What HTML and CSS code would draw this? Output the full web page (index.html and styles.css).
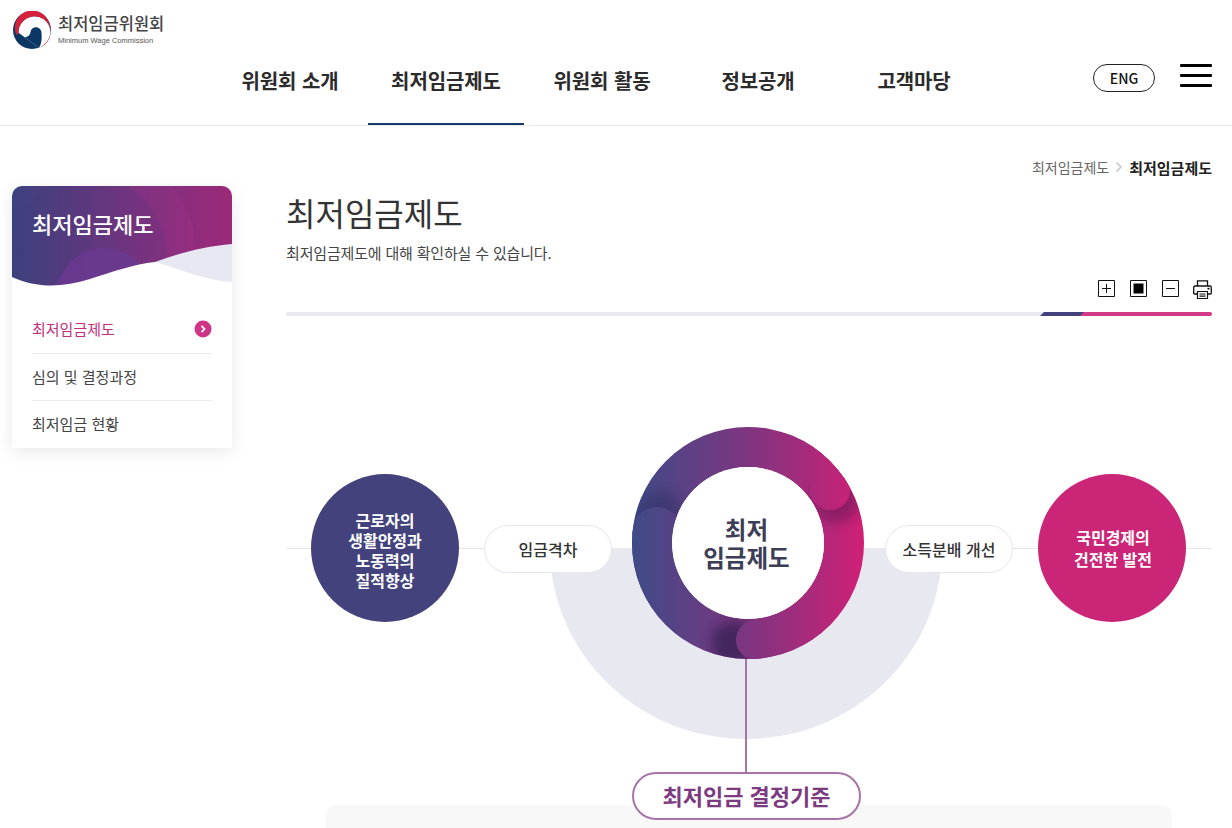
FILE: index.html
```html
<!DOCTYPE html>
<html lang="ko">
<head>
  <meta charset="UTF-8">
  <meta name="viewport" content="width=device-width, initial-scale=1.0">
  <title>최저임금제도 - 최저임금위원회</title>
  <link rel="stylesheet" href="styles.css">
</head>
<body>
  <div class="page">
    <header class="header">
      <a class="logo" href="#">
        <svg class="logo-mark" viewBox="0 0 38 38" width="38" height="38">
          <circle cx="19" cy="19" r="19" fill="#0b3765"/>
          <path d="M5.500 22A16 16 0 1 1 26 36.700Z" fill="#fff"/>
          <path d="M3.500 24A16.500 16.500 0 0 1 35 9.500 19 19 0 0 1 26 36.700 16 16 0 1 0 5.500 22Z" fill="#d6213c"/>
          <path d="M5.500 22A6.200 6.200 0 0 0 17.500 21 5.500 5.500 0 0 1 28.500 22.500C29 28 28.500 33 26 36.700Z" fill="#0b3765"/>
        </svg>
        <span class="logo-text">
          <strong>최저임금위원회</strong>
          <small>Minimum Wage Commission</small>
        </span>
      </a>
      <nav class="gnb">
        <a href="#">위원회 소개</a>
        <a href="#" class="on">최저임금제도</a>
        <a href="#">위원회 활동</a>
        <a href="#">정보공개</a>
        <a href="#">고객마당</a>
      </nav>
      <div class="util">
        <a class="eng" href="#">ENG</a>
        <button class="burger" aria-label="menu"><i></i><i></i><i></i></button>
      </div>
    </header>

    <div class="wrap">
      <aside class="side">
        <div class="side-head">
          <svg viewBox="0 0 220 100" width="220" height="100">
            <defs>
              <linearGradient id="sideGrad" x1="0" y1="0" x2="1" y2="0">
                <stop offset="0" stop-color="#3c427f"/>
                <stop offset="0.55" stop-color="#7c3382"/>
                <stop offset="1" stop-color="#a62a7c"/>
              </linearGradient>
            </defs>
            <path d="M0 0H220V100H0Z" fill="url(#sideGrad)"/>
            <circle cx="75" cy="70" r="80" fill="#3c3a72" opacity="0.14"/>
            <path d="M160 0Q182 25 183 62L220 60V0Z" fill="#5c2a6c" opacity="0.12"/>
            <path d="M44 100C54 74 72 62 92 62 108 62 122 70 132 84V100Z" fill="#6a3a90" opacity="0.85"/>
            <path d="M143 76C170 66 195 60 220 58V100H143Z" fill="#e8e8f2"/>
            <path d="M0 91C24 102 50 102 78 93 100 86 122 78 143 76 170 84 195 95 220 96V100H0Z" fill="#fff"/>
          </svg>
          <h2>최저임금제도</h2>
        </div>
        <ul class="side-menu">
          <li class="on"><a href="#">최저임금제도
            <svg viewBox="0 0 18 18" width="18" height="18"><circle cx="9" cy="9" r="8.500" fill="#cf3586"/><path d="M7.500 5.800 10.500 9 7.500 12.200" fill="none" stroke="#fff" stroke-width="1.800"/></svg>
          </a></li>
          <li><a href="#">심의 및 결정과정</a></li>
          <li><a href="#">최저임금 현황</a></li>
        </ul>
      </aside>

      <main class="content">
        <div class="crumb">
          <span>최저임금제도</span>
          <svg viewBox="0 0 8 12" width="8" height="12"><path d="M1.500 1.500 6 6 1.500 10.500" fill="none" stroke="#c8c8c8" stroke-width="1.600"/></svg>
          <b>최저임금제도</b>
        </div>
        <h1>최저임금제도</h1>
        <p class="lead">최저임금제도에 대해 확인하실 수 있습니다.</p>
        <div class="tools">
          <svg viewBox="0 0 18 18" width="18" height="18"><path d="M.5.500h16v16H.5zM8.500 4v9M4 8.500h9" fill="none" stroke="#111"/></svg>
          <svg viewBox="0 0 18 18" width="18" height="18"><path d="M.5.500h16v16H.5z" fill="none" stroke="#111"/><path d="M3.500 3.500h10v10h-10z" fill="#000"/></svg>
          <svg viewBox="0 0 18 18" width="18" height="18"><path d="M.5.500h16v16H.5zM4 8.500h9" fill="none" stroke="#111"/></svg>
          <svg class="print" viewBox="0 0 19 19" width="19" height="19">
            <path d="M4.500 6V.8h10V6M4.500 14H1.800Q.7 14 .7 13V7.500Q.7 6 2 6H17Q18.300 6 18.300 7.500V13Q18.300 14 17.200 14H14.500" fill="none" stroke="#111" stroke-width="1.300"/>
            <path d="M4.500 11.500h10v7h-10zM6.500 14h6M6.500 16.200h6" fill="none" stroke="#111" stroke-width="1.200"/>
            <path d="M14.500 7.800h2v1.700h-2z" fill="#111"/>
          </svg>
        </div>
        <div class="bar"><i class="bar-navy"></i><i class="bar-pink"></i></div>

        <section class="diagram">
          <div class="axis"></div>
          <div class="half"></div>
          <div class="stem"></div>
          <div class="node node-navy"><span>근로자의<br>생활안정과<br>노동력의<br>질적향상</span></div>
          <div class="pill pill-left">임금격차</div>
          <div class="ring">
            <svg viewBox="0 0 232 232" width="232" height="232">
              <defs>
                <linearGradient id="ringGrad" gradientUnits="userSpaceOnUse" x1="0" y1="0" x2="232" y2="0">
                  <stop offset="0" stop-color="#3f4b88"/>
                  <stop offset="0.5" stop-color="#7e3580"/>
                  <stop offset="1" stop-color="#d02076"/>
                </linearGradient>
                <clipPath id="ringClip">
                  <path clip-rule="evenodd" d="M116 0a116 116 0 1 0 0 232a116 116 0 1 0 0-232ZM116 40a76 76 0 1 1 0 152a76 76 0 1 1 0-152Z"/>
                </clipPath>
                <filter id="soft" x="-50%" y="-50%" width="200%" height="200%"><feGaussianBlur stdDeviation="6"/></filter>
              </defs>
              <g clip-path="url(#ringClip)">
                <rect width="232" height="232" fill="url(#ringGrad)"/>
                <circle cx="204" cy="72" r="24" fill="#55164f" opacity="0.45" filter="url(#soft)"/>
                <circle cx="27" cy="88" r="24" fill="#2c2a5c" opacity="0.4" filter="url(#soft)"/>
                <circle cx="102" cy="216" r="22" fill="#2c1a4c" opacity="0.65" filter="url(#soft)"/>
                <path d="M150 0H232V50Q218 63 198 63 180 60 165 40Z" fill="url(#ringGrad)"/>
                <circle cx="198" cy="63" r="20" fill="url(#ringGrad)"/>
                <path d="M0 105H50V232H0Z" fill="url(#ringGrad)"/>
                <circle cx="25" cy="105" r="25" fill="url(#ringGrad)"/>
                <path d="M124 193H232V232H124Z" fill="url(#ringGrad)"/>
                <circle cx="124" cy="213" r="20" fill="url(#ringGrad)"/>
              </g>
            </svg>
            <div class="ring-text">최저<br>임금제도</div>
          </div>
          <div class="pill pill-right">소득분배 개선</div>
          <div class="node node-pink"><span>국민경제의<br>건전한 발전</span></div>
          <div class="panel"></div>
          <div class="pill-main">최저임금 결정기준</div>
        </section>
      </main>
    </div>
  </div>
</body>
</html>
```

FILE: styles.css
```css
* {
  box-sizing: border-box;
}
html, body {
  margin: 0;
  height: 828px;
  overflow: hidden;
}
body {
  font-family: "Noto Sans CJK KR", "Noto Sans", sans-serif;
  color: #333;
  background: #fff;
}
a {
  color: inherit;
  text-decoration: none;
}
ul {
  list-style: none;
  margin: 0;
  padding: 0;
}
.page {
  height: 828px;
  overflow: hidden;
}

/* header */
.header {
  position: relative;
  height: 126px;
  border-bottom: 1px solid #e9e9e9;
  display: flex;
  justify-content: space-between;
  padding: 0 20px 0 212px;
}
.logo {
  position: absolute;
  left: 13px;
  top: 11px;
  display: flex;
  gap: 7px;
}
.logo-text {
  display: flex;
  flex-direction: column;
  color: #444;
}
.logo-text strong {
  font-size: 16.500px;
  line-height: 25px;
  font-weight: 500;
}
.logo-text small {
  font-family: "Liberation Sans", sans-serif;
  font-size: 7.500px;
  line-height: 9px;
  color: #555;
}
.gnb {
  display: flex;
  padding-top: 36px;
}
.gnb a {
  width: 156px;
  height: 89px;
  padding-top: 29px;
  text-align: center;
  font-size: 20px;
  line-height: 32px;
  font-weight: 700;
  letter-spacing: -0.100px;
  color: #2b2b2b;
}
.gnb a.on {
  border-bottom: 2px solid #17386b;
}
.util {
  display: flex;
  align-items: flex-start;
  gap: 25px;
  padding-top: 62px;
}
.eng {
  width: 62px;
  height: 28px;
  margin-top: 2px;
  border: 1px solid #222;
  border-radius: 14px;
  text-align: center;
  font-size: 14px;
  line-height: 27px;
  font-weight: 500;
  color: #111;
}
.burger {
  width: 32px;
  height: 26px;
  padding: 2px 0 0;
  border: 0;
  background: none;
  display: flex;
  flex-direction: column;
  gap: 7px;
}
.burger i {
  display: block;
  width: 32px;
  height: 3px;
  background: #000;
  border-radius: 1px;
}

/* layout */
.wrap {
  display: flex;
  padding: 0 20px 0 12px;
  gap: 54px;
}
.side {
  flex: 0 0 220px;
  height: 262px;
  margin-top: 60px;
  border-radius: 10px 10px 0 0;
  background: #fff;
  box-shadow: 0 4px 18px rgba(0, 0, 0, 0.09);
}
.side-head {
  position: relative;
  height: 100px;
  border-radius: 10px 10px 0 0;
  overflow: hidden;
}
.side-head svg {
  display: block;
}
.side-head h2 {
  position: absolute;
  left: 20px;
  top: 20px;
  margin: 0;
  font-size: 22px;
  line-height: 34px;
  font-weight: 500;
  color: #fff;
}
.side-menu {
  padding: 20px 20px 0;
}
.side-menu li + li {
  border-top: 1px solid #ececec;
}
.side-menu a {
  height: 46px;
  padding-bottom: 2px;
  display: flex;
  align-items: center;
  justify-content: space-between;
  font-size: 15px;
  color: #444;
}
.side-menu .on a {
  height: 47px;
  color: #c12f7c;
}
.content {
  flex: 1;
}
.crumb {
  display: flex;
  justify-content: flex-end;
  align-items: center;
  gap: 6px;
  padding-top: 30px;
  height: 52px;
  font-size: 14px;
  color: #666;
}
.crumb b {
  font-size: 15px;
  color: #222;
}
.content h1 {
  margin: 10px 0 0;
  font-size: 32px;
  line-height: 48px;
  font-weight: 400;
  color: #333;
}
.lead {
  margin: 6px 0 0;
  font-size: 15px;
  line-height: 22px;
  letter-spacing: -0.170px;
  color: #444;
}
.tools {
  display: flex;
  justify-content: flex-end;
  gap: 14px;
  height: 18px;
  margin-top: 16px;
}
.print {
  margin-left: -1px;
}
.bar {
  position: relative;
  height: 4px;
  margin-top: 14px;
  background: #e8e8f1;
  border-radius: 2px;
  overflow: hidden;
}
.bar i {
  position: absolute;
  top: 0;
  bottom: 0;
  transform: skewX(-45deg);
}
.bar-navy {
  right: 126px;
  width: 44px;
  background: #43427c;
}
.bar-pink {
  right: -4px;
  width: 134px;
  background: #d33a87;
}

/* diagram: positions are relative to the canvas at (286, 316) */
.diagram {
  position: relative;
  height: 512px;
}
.axis {
  position: absolute;
  left: 0;
  right: 0;
  top: 232px;
  height: 1px;
  background: #e4e4ee;
}
.half {
  position: absolute;
  left: 264px;
  top: 232px;
  width: 392px;
  height: 191px;
  border-radius: 0 0 196px 196px / 0 0 191px 191px;
  background: #e8e8f1;
}
.stem {
  position: absolute;
  left: 459px;
  top: 340px;
  width: 2px;
  height: 118px;
  background: #a874a8;
}
.node {
  position: absolute;
  top: 158px;
  width: 148px;
  height: 148px;
  border-radius: 50%;
  display: flex;
  align-items: center;
  justify-content: center;
  text-align: center;
  font-size: 16px;
  font-weight: 700;
  color: #fff;
}
.node-navy {
  left: 25px;
  padding-top: 3px;
  line-height: 20px;
  background: #43427c;
}
.node-pink {
  left: 752px;
  padding-left: 2px;
  line-height: 22px;
  background: #cb2577;
}
.pill {
  position: absolute;
  top: 209px;
  width: 128px;
  height: 48px;
  border: 1px solid #e6e6f0;
  border-radius: 24px;
  background: #fff;
  text-align: center;
  font-size: 16px;
  line-height: 46px;
  font-weight: 500;
  color: #333;
}
.pill-left {
  left: 198px;
}
.pill-right {
  left: 599px;
}
.ring {
  position: absolute;
  left: 346px;
  top: 111px;
  width: 232px;
  height: 232px;
}
.ring svg {
  display: block;
}
.ring-text {
  position: absolute;
  left: 40px;
  top: 40px;
  width: 152px;
  height: 152px;
  padding: 0 3px 1px 0;
  border-radius: 50%;
  background: #fff;
  display: flex;
  align-items: center;
  justify-content: center;
  text-align: center;
  font-size: 23.500px;
  line-height: 28px;
  font-weight: 700;
  color: #3d3d55;
}
.panel {
  position: absolute;
  left: 40px;
  top: 489px;
  width: 846px;
  height: 60px;
  border-radius: 10px 10px 0 0;
  background: #f8f8f8;
}
.pill-main {
  position: absolute;
  left: 346px;
  top: 456px;
  width: 229px;
  height: 48px;
  border: 2px solid #a874a8;
  border-radius: 24px;
  background: #fff;
  text-align: center;
  font-size: 22px;
  line-height: 43px;
  font-weight: 700;
  color: #7c3a80;
}
```
